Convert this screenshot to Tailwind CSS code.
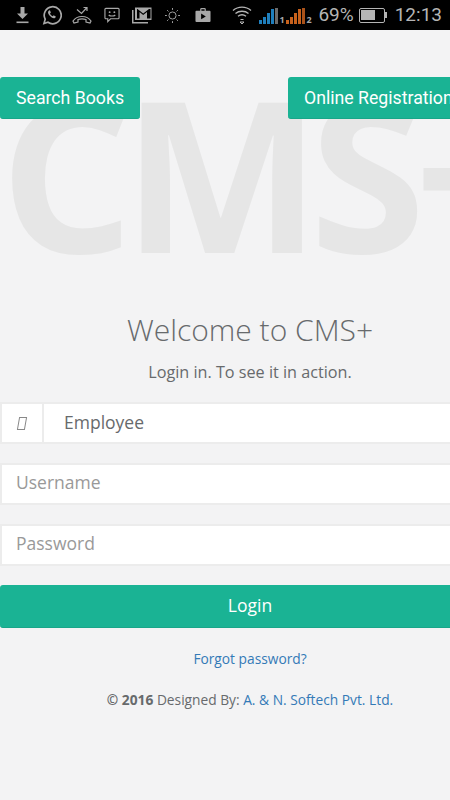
<!DOCTYPE html>
<html lang="en">
<head>
    <meta charset="UTF-8">
    <title>CMS+ Login</title>
    <meta name="viewport" content="width=device-width, initial-scale=1.0">
    <script src="https://cdn.jsdelivr.net/npm/@tailwindcss/browser@4"></script>
</head>
<body class="bg-[#f3f3f4] font-['Open_Sans',sans-serif]">
<div class="w-[450px] h-[800px] overflow-hidden relative">

<!-- status bar -->
<div class="h-[30px] bg-black flex items-center text-[#a8a8a8] relative">
    <div class="flex items-center pl-[16px]">
        <!-- download -->
        <svg class="w-[13px] h-[17px]" viewBox="0 0 13 17" fill="#a8a8a8"><path d="M4.500 0h4v6.500H12L6.500 12 1 6.500h3.500z"/><rect x="0.500" y="14.500" width="12" height="1.600"/></svg>
        <!-- whatsapp -->
        <svg class="w-[20px] h-[20px] ml-[13px]" viewBox="0 0 20 20" fill="none" stroke="#a8a8a8" stroke-width="1.700"><path d="M2 18.500l1.200-4.300A8.500 8.500 0 1 1 6 17.300z"/><path d="M7 5.500c-1.500 1-1.300 3 .5 5s4 3.500 5.500 2.500l1-1.300-2.300-1.400-1 .9c-1-.4-2.200-1.600-2.700-2.800l.9-.9-1-2.300z" fill="#a8a8a8" stroke="none"/></svg>
        <!-- missed call -->
        <svg class="w-[20px] h-[18px] ml-[10px]" viewBox="0 0 20 18" fill="none" stroke="#a8a8a8" stroke-width="1.200"><path d="M1 15c4-6 14-6 18 0l-1 2-4-1v-2.500c-3-1-5-1-8 0V16l-4 1z"/><path d="M5 3.500l4.500 4 5-5.500M11.500 1.500h3.500v3.500"/></svg>
        <!-- sms smiley -->
        <svg class="w-[16px] h-[16px] ml-[12px]" viewBox="0 0 17 17" fill="none" stroke="#a8a8a8" stroke-width="1.200"><path d="M2 1.500h13a1 1 0 0 1 1 1v9a1 1 0 0 1-1 1H7l-3 3v-3H2a1 1 0 0 1-1-1v-9a1 1 0 0 1 1-1z"/><circle cx="6" cy="5.500" r="1" fill="#a8a8a8" stroke="none"/><circle cx="11" cy="5.500" r="1" fill="#a8a8a8" stroke="none"/><path d="M5 8.500c1.500 1.500 5.500 1.500 7 0"/></svg>
        <!-- gmail stack -->
        <svg class="w-[20px] h-[17px] ml-[12px]" viewBox="0 0 20 17" fill="#a8a8a8"><path d="M0 3h1.500v12H16v1.500H0z"/><path d="M3 0.500h16.500v12.500H3zM5 2v9.500h2.500V5l3.700 3 3.800-3v6.500h3.500V2h-1.500l-5.800 4.500L5.500 2z" fill-rule="evenodd"/></svg>
        <!-- brightness -->
        <svg class="w-[15px] h-[15px] ml-[13px]" viewBox="0 0 16 16" fill="none" stroke="#a8a8a8" stroke-width="1"><circle cx="8" cy="8" r="3.800"/><path d="M8 0v2M8 14v2M0 8h2M14 8h2M2.300 2.300l1.400 1.400M12.300 12.300l1.400 1.400M2.300 13.700l1.400-1.400M12.300 3.700l1.400-1.400"/></svg>
        <!-- play store bag -->
        <svg class="w-[16px] h-[16px] ml-[15px]" viewBox="0 0 16 17" fill="#a8a8a8"><path d="M1 4h4V2.500A1.500 1.500 0 0 1 6.500 1h3A1.500 1.500 0 0 1 11 2.500V4h4a1 1 0 0 1 1 1v10a1 1 0 0 1-1 1H1a1 1 0 0 1-1-1V5a1 1 0 0 1 1-1zM6.300 4h3.400V2.500H6.300zM6 7v6l5-3z" fill-rule="evenodd"/></svg>
    </div>
    <div class="flex items-center ml-auto pr-[8px]">
        <!-- wifi -->
        <svg class="w-[20px] h-[20px]" viewBox="0 0 20 20" fill="none" stroke="#b5b5b5" stroke-width="1.300"><path d="M1 5.500c5-4.500 13-4.500 18 0M3.500 8.500c3.500-3 9.500-3 13 0M6 11.300c2.300-1.800 5.700-1.800 8 0"/><path d="M8.500 14.500h3M8 17l2 2 2-2z" stroke-width="1"/></svg>
        <!-- sim 1 -->
        <div class="flex items-end gap-[1px] ml-[7px] h-[17px] w-[27px]">
            <span class="w-[3px] h-[4px] bg-[#1f7fbd]"></span>
            <span class="w-[3px] h-[7px] bg-[#1f7fbd]"></span>
            <span class="w-[3px] h-[11px] bg-[#1f7fbd]"></span>
            <span class="w-[3px] h-[15px] bg-[#1f7fbd]"></span>
            <span class="w-[3px] h-[16px] bg-[#6b6b6b]"></span>
            <span class="text-[9px] leading-[9px] font-bold text-[#a8a8a8]">1</span>
        </div>
        <!-- sim 2 -->
        <div class="flex items-end gap-[1px] h-[17px] w-[26px]">
            <span class="w-[3px] h-[4px] bg-[#c7611c]"></span>
            <span class="w-[3px] h-[7px] bg-[#c7611c]"></span>
            <span class="w-[3px] h-[11px] bg-[#c7611c]"></span>
            <span class="w-[3px] h-[15px] bg-[#c7611c]"></span>
            <span class="w-[3px] h-[16px] bg-[#a9521a]"></span>
            <span class="text-[9px] leading-[9px] font-bold text-[#a8a8a8]">2</span>
        </div>
        <span class="font-['Roboto',sans-serif] text-[19px] leading-[30px] ml-[6px] text-[#b5b5b5]">69%</span>
        <!-- battery -->
        <div class="flex items-center ml-[5px]">
            <div class="w-[26px] h-[15px] border-[1.500px] border-[#b5b5b5] rounded-[2px] p-[1.500px]">
                <div class="h-full w-[64%] bg-[#b5b5b5]"></div>
            </div>
            <span class="w-[2px] h-[6px] bg-[#b5b5b5]"></span>
        </div>
        <span class="font-['Roboto',sans-serif] text-[19px] leading-[30px] ml-[8px] text-[#b5b5b5]">12:13</span>
    </div>
</div>

<!-- watermark -->
<div class="absolute left-0 top-[42px] font-bold text-[210px] leading-[260px] tracking-[-11px] text-[#e6e6e6] whitespace-nowrap select-none">CMS+</div>

<main class="relative w-[500px]">
    <div class="flex justify-between pt-[47px]">
        <a class="h-[42px] px-[16px] pt-[1px] flex items-center bg-[#1ab394] border-b border-[#18a689] rounded-[3px] text-white text-[17.700px] font-['Roboto',sans-serif]">Search Books</a>
        <a class="h-[42px] w-[212px] px-[16px] pt-[1px] flex items-center bg-[#1ab394] border-b border-[#18a689] rounded-[3px] text-white text-[17.700px] font-['Roboto',sans-serif] whitespace-nowrap">Online Registration</a>
    </div>

    <h3 class="mt-[191px] text-center text-[30px] leading-[40px] font-light text-[#676a6c]">Welcome to CMS+</h3>
    <p class="mt-[11px] text-center text-[16.200px] leading-[22px] text-[#676a6c]">Login in. To see it in action.</p>

    <form class="mt-[19px]">
        <div class="flex h-[42px] bg-white border-y-2 border-l-2 border-[#ececec]">
            <div class="w-[42px] flex items-center justify-center border-r-2 border-[#ececec]">
                <span class="w-[8px] h-[13px] border border-[#888] skew-x-[-10deg]"></span>
            </div>
            <div class="pl-[20px] pb-[2px] flex items-center text-[17.500px] text-[#676a6c]">Employee</div>
        </div>
        <div class="mt-[19px] h-[42px] pl-[14px] pb-[3px] flex items-center bg-white border-y-2 border-l-2 border-[#ececec] text-[17.500px] text-[#999]">Username</div>
        <div class="mt-[19px] h-[42px] pl-[14px] pb-[3px] flex items-center bg-white border-y-2 border-l-2 border-[#ececec] text-[17.500px] text-[#999]">Password</div>
        <button type="button" class="mt-[19px] w-full h-[43px] pb-[2px] bg-[#1ab394] border-b border-[#18a689] rounded-[3px] text-white text-[17.500px]">Login</button>
    </form>

    <p class="mt-[20px] text-center text-[13.750px] leading-[22px] text-[#337ab7]">Forgot password?</p>
    <p class="mt-[19px] text-center text-[13.750px] leading-[22px] text-[#676a6c]"><b>© 2016</b> Designed By: <span class="text-[#337ab7]">A. &amp; N. Softech Pvt. Ltd.</span></p>
</main>

</div>
</body>
</html>
